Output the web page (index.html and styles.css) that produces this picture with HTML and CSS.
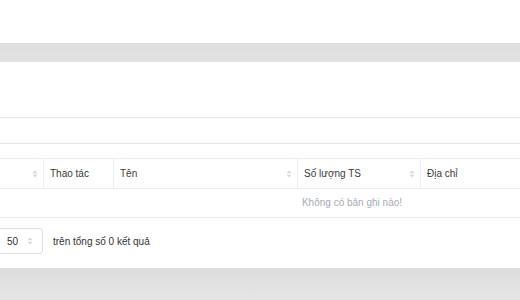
FILE: index.html
```html
<!DOCTYPE html>
<html lang="vi">

<head>
    <meta charset="UTF-8">
    <meta name="viewport" content="width=device-width, initial-scale=1.0">
    <title>Danh sách</title>
    <link rel="stylesheet" href="styles.css">
</head>

<body>
    <div class="topbar"></div>
    <div class="band"></div>

    <div class="card">
        <div class="card-head"></div>
        <div class="toolbar"></div>

        <div class="table">
            <div class="thead">
                <div class="th sortable"><span></span>
                    <svg class="sort" viewBox="0 0 6 8"><path d="M3 0.5 L5.5 3.2 H0.5 Z M3 7.5 L5.5 4.8 H0.5 Z"/></svg>
                </div>
                <div class="th">Thao tác</div>
                <div class="th sortable"><span>Tên</span>
                    <svg class="sort" viewBox="0 0 6 8"><path d="M3 0.5 L5.5 3.2 H0.5 Z M3 7.5 L5.5 4.8 H0.5 Z"/></svg>
                </div>
                <div class="th sortable"><span>Số lượng TS</span>
                    <svg class="sort" viewBox="0 0 6 8"><path d="M3 0.5 L5.5 3.2 H0.5 Z M3 7.5 L5.5 4.8 H0.5 Z"/></svg>
                </div>
                <div class="th">Địa chỉ</div>
            </div>
            <div class="empty">Không có bản ghi nào!</div>
        </div>

        <div class="pager">
            <div class="page-size">
                <span>50</span>
                <svg class="sort" viewBox="0 0 6 8"><path d="M3 0.5 L5.5 3.2 H0.5 Z M3 7.5 L5.5 4.8 H0.5 Z"/></svg>
            </div>
            <span class="total">trên tổng số 0 kết quả</span>
        </div>
    </div>

    <div class="bottom"></div>
</body>

</html>
```

FILE: styles.css
```css
body {
    font-family: "Liberation Sans", Arial, sans-serif;
    font-size: 10px;
    color: #333;
    background-color: #e4e4e4;
    margin: 0;
    padding: 0;
    height: 300px;
    overflow: hidden;
}

.topbar {
    height: 43px;
    background-color: #fff;
}

.band {
    height: 19px;
    background: linear-gradient(#dedede, #e2e2e2);
}

.card {
    background-color: #fff;
    height: 206px;
    overflow: hidden;
}

.card-head {
    height: 55px;
    border-bottom: 1px solid #e6e6e6;
}

.toolbar {
    height: 25px;
    border-bottom: 1px solid #e6e6e6;
    margin-bottom: 14px;
}

.table {
    width: 704px;
}

.thead {
    display: grid;
    grid-template-columns: 43px 70px 184px 123px 1fr;
    height: 29px;
    border-top: 1px solid #ebeef5;
    border-bottom: 1px solid #ebeef5;
}

.th {
    display: flex;
    align-items: center;
    justify-content: space-between;
    padding: 0 5px 0 6px;
    border-left: 1px solid #ebeef5;
    color: #3a3a3a;
}

.th:first-child {
    border-left: none;
}

.sort {
    width: 6px;
    height: 8px;
    fill: #d4d7dd;
    flex-shrink: 0;
}

.empty {
    height: 28px;
    line-height: 28px;
    text-align: center;
    color: #a8abb2;
    border-bottom: 1px solid #ebeef5;
}

.pager {
    display: flex;
    align-items: center;
    gap: 10px;
    padding-top: 10px;
}

.page-size {
    display: flex;
    align-items: center;
    justify-content: space-between;
    box-sizing: border-box;
    width: 47px;
    height: 26px;
    margin-left: -4px;
    padding: 0 9px 0 10px;
    border: 1px solid #dcdfe6;
    border-radius: 3px;
}

.total {
    color: #333;
}

.bottom {
    height: 32px;
    background: linear-gradient(#dcdcdc, #e6e6e6);
}
```
